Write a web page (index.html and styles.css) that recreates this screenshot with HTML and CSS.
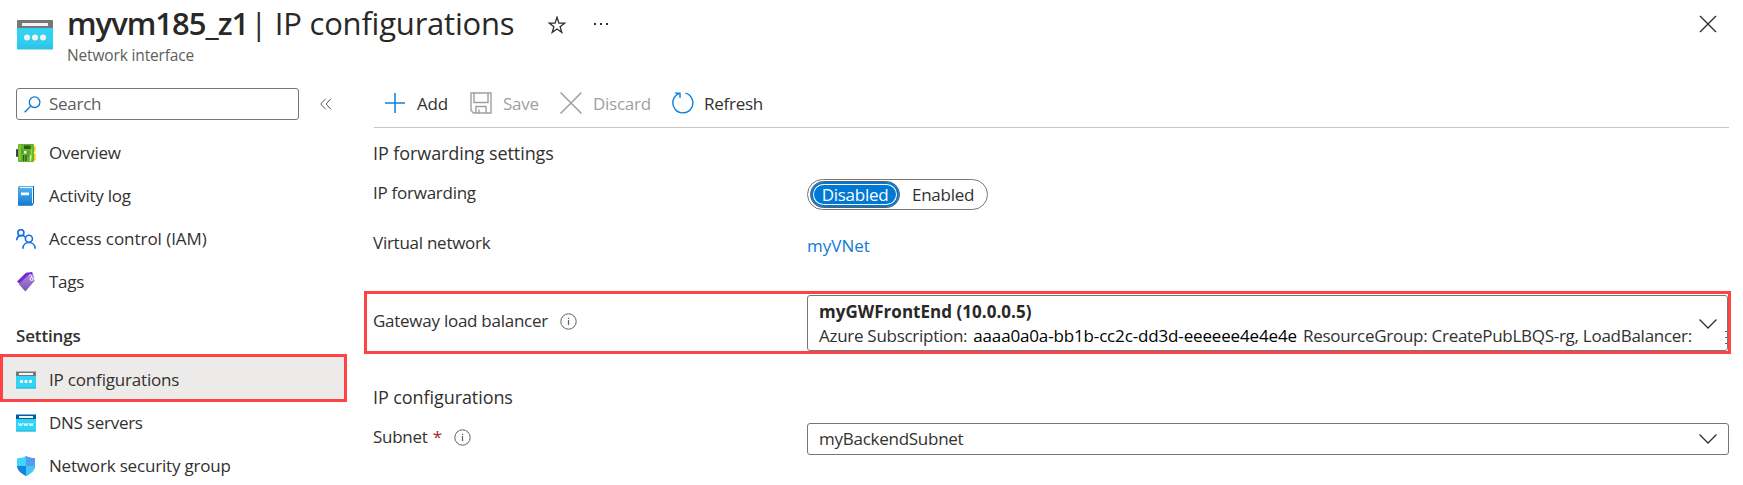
FILE: index.html
```html
<!DOCTYPE html>
<html lang="en">
<head>
<meta charset="utf-8">
<title>myvm185_z1 | IP configurations</title>
<link rel="stylesheet" href="styles.css">
</head>
<body>
<header class="header">
  <svg class="header-icon" width="36" height="30" viewBox="0 0 36 30">
    <defs><linearGradient id="nic" x1="0" y1="0" x2="0" y2="1"><stop offset="0" stop-color="#32d4f5"/><stop offset=".6" stop-color="#32d0f0"/><stop offset="1" stop-color="#2fc0e2"/></linearGradient></defs>
    <path d="M0 7h36v21.500a1 1 0 0 1-1 1H1a1 1 0 0 1-1-1z" fill="url(#nic)"/>
    <path d="M1 0h34a1 1 0 0 1 1 1v7H0V1a1 1 0 0 1 1-1z" fill="#767676"/>
    <rect x="5" y="3" width="26" height="3" fill="#f2f2f2"/>
    <g fill="#f2f2f2"><circle cx="10" cy="17.500" r="3"/><circle cx="18" cy="17.500" r="3"/><circle cx="26" cy="17.500" r="3"/></g>
  </svg>
  <div class="titles">
    <h1 class="title"><span class="title-name">myvm185_z1</span><span class="title-page">| IP configurations</span></h1>
    <div class="subtitle">Network interface</div>
  </div>
  <svg class="star" width="18" height="18" viewBox="0 0 18 18" fill="none" stroke="#323130" stroke-width="1.300"><path d="M9 1.200l1.900 5.900h5.900l-4.700 3.600 1.700 5.700L9 13l-4.800 3.400 1.700-5.700L1.200 7.100h5.900z"/></svg>
  <svg class="more" width="16" height="4" viewBox="0 0 16 4" fill="#323130"><rect x="1" y="1" width="2" height="2"/><rect x="7" y="1" width="2" height="2"/><rect x="13" y="1" width="2" height="2"/></svg>
  <svg class="close" width="18" height="18" viewBox="0 0 18 18" stroke="#323130" stroke-width="1.400"><path d="M1 1l16 16M17 1L1 17"/></svg>
</header>
<div class="body">
  <nav class="sidebar">
    <div class="search-row">
      <div class="search">
        <svg width="17" height="17" viewBox="0 0 17 17" fill="none" stroke="#0f78d4" stroke-width="1.300"><circle cx="10.600" cy="6.200" r="5.300"/><path d="M6.800 10L.6 16.200"/></svg>
        <span class="t-search">Search</span>
      </div>
      <svg class="collapse" width="12" height="12" viewBox="0 0 12 12" fill="none" stroke="#605e5c" stroke-width="1"><path d="M5.700.7L.8 6l4.900 5.300M11 .7L6.100 6l4.900 5.300"/></svg>
    </div>
    <a class="item">
      <svg width="20" height="20" viewBox="0 0 20 20"><rect x="0" y="6" width="2" height="8" rx=".8" fill="#444"/><rect x="17" y="3.500" width="2.600" height="5" fill="#ffca00"/><rect x="17" y="10.500" width="2.600" height="7" fill="#ffca00"/><rect x="2" y="1" width="16" height="18" rx="1" fill="#68b52d"/><path d="M4 2v15M15.500 6v10" stroke="#94d83f" stroke-width="1.200"/><rect x="8" y="2.500" width="6.500" height="3.500" fill="#285b13"/><rect x="8" y="8" width="2.500" height="2.500" fill="#e7f5d9"/><path d="M7.500 12v6M10 12v6" stroke="#315b23" stroke-width="1.400"/><path d="M14.500 12v6" stroke="#d7eac8" stroke-width="1.300"/><path d="M6 6v5M12 8v6" stroke="#48851f"/></svg>
      <span class="t-overview">Overview</span></a>
    <a class="item">
      <svg width="20" height="20" viewBox="0 0 20 20"><defs><linearGradient id="log" x1="0" y1="0" x2="0" y2="1"><stop offset="0" stop-color="#50b0ee"/><stop offset="1" stop-color="#137cd1"/></linearGradient></defs><path d="M3.500 0H18v17l-1.500 2.500H2V1.500z" fill="#14609f"/><path d="M3.500 1H17v16l-1 1V3H3z" fill="#e9f4fc"/><path d="M3.500 0H17v1H4z" fill="#58b2ed"/><rect x="2" y="2" width="14" height="17.500" rx=".8" fill="url(#log)"/><rect x="5" y="6.500" width="8" height="2.700" fill="#fff"/></svg>
      <span class="t-activity">Activity log</span></a>
    <a class="item">
      <svg width="20" height="20" viewBox="0 0 20 20" fill="none" stroke="#126de0" stroke-width="1.600"><circle cx="4.900" cy="3.700" r="3"/><circle cx="12.900" cy="9.700" r="3.500"/><path d="M.8 11.200C.8 5.500 7.600 5.700 9.400 8.300M6.800 19.700c.3-8.200 12.100-8.200 12.400 0"/></svg>
      <span class="t-iam">Access control (IAM)</span></a>
    <a class="item">
      <svg width="20" height="20" viewBox="0 0 20 20"><defs><linearGradient id="tag" x1="0" y1="0" x2="0" y2="1"><stop offset="0" stop-color="#b08be0"/><stop offset="1" stop-color="#7c4eb8"/></linearGradient></defs><path d="M1 9.500L10 .8 16 0l1 2-10 13z" fill="#6d2fd0"/><path d="M3 12L13 2.600l4.500.2L18.500 9 9.300 19.500 3.500 13z" fill="url(#tag)"/><circle cx="15.600" cy="7" r="1.500" fill="#a77be0" stroke="#fff"/><path d="M13.500 4c0-2 2-2 2 0v1" fill="none" stroke="#eee0ff" stroke-width="1"/></svg>
      <span class="t-tags">Tags</span></a>
    <h2 class="group"><span class="t-settings">Settings</span></h2>
    <a class="item selected">
      <svg width="20" height="20" viewBox="0 0 20 20"><rect y="2" width="20" height="16.500" rx=".6" fill="#32d4f5"/><rect y="17" width="20" height="1.500" fill="#2fc0e2"/><rect y="1.500" width="20" height="4.500" fill="#767676"/><rect x="3" y="3" width="14" height="2" fill="#f5f5f5"/><g fill="#fff"><rect x="4" y="10" width="3" height="3" rx=".8"/><rect x="8.500" y="10" width="3" height="3" rx=".8"/><rect x="13" y="10" width="3" height="3" rx=".8"/></g></svg>
      <span class="t-ipc">IP configurations</span></a>
    <a class="item">
      <svg width="20" height="20" viewBox="0 0 20 20"><rect y="2" width="20" height="16.500" rx=".6" fill="#32d4f5"/><rect y="17" width="20" height="1.500" fill="#2fc0e2"/><rect y="1.500" width="20" height="4.500" fill="#005ba1"/><rect x="3" y="3" width="14" height="2" fill="#f5f5f5"/><path d="M2.500 10l1 3 1-2.500 1 2.500 1-3M7.800 10l1 3 1-2.500 1 2.500 1-3M13.100 10l1 3 1-2.500 1 2.500 1-3" stroke="#fff" fill="none" stroke-width=".9"/></svg>
      <span class="t-dns">DNS servers</span></a>
    <a class="item">
      <svg width="20" height="20" viewBox="0 0 20 20"><path d="M10 0C7 2.300 4.500 1.800 1 2.400V9c0 5.500 4.500 8.500 9 11z" fill="#40d4fa"/><path d="M10 0c3 2.300 5.500 1.800 9 2.400V9c0 5.500-4.500 8.500-9 11z" fill="#1177d8"/><path d="M10 0c3 2.300 5.500 1.800 9 2.400V9q0 .5-.1 1H10z" fill="#559cf0"/><path d="M1.100 10H10v10C5.500 17.500 1.500 15 1.100 10z" fill="#1683df"/><path d="M10 10h8.900c-.4 5-4.400 7.500-8.900 10z" fill="#40c9f5"/></svg>
      <span class="t-nsg">Network security group</span></a>
  </nav>
  <main class="main">
    <div class="toolbar">
      <svg class="i-add" width="22" height="22" viewBox="0 0 22 22" stroke="#0f7fd9" stroke-width="1.500"><path d="M11 1v20M1 11h20"/></svg>
      <span class="cmd t-add">Add</span>
      <svg class="i-save" width="22" height="22" viewBox="0 0 22 22" fill="none" stroke="#a19f9d" stroke-width="1.400"><path d="M1 1h20v20H3.500L1 18.500zM4 1v9.500h14V1M6 21v-6.500h10V21M9 21v-3.500"/></svg>
      <span class="cmd off t-save">Save</span>
      <svg class="i-discard" width="22" height="22" viewBox="0 0 22 22" stroke="#a19f9d" stroke-width="1.500"><path d="M.5.5l21 21M21.500.5l-21 21"/></svg>
      <span class="cmd off t-discard">Discard</span>
      <svg class="i-refresh" width="22" height="22" viewBox="0 0 22 22" fill="none" stroke="#0f7fd9" stroke-width="1.400"><path d="M13.500 1.200A10 10 0 1 1 7 1.600M3 1.100h5V6"/></svg>
      <span class="cmd t-refresh">Refresh</span>
    </div>
    <h3 class="section first"><span class="t-fset">IP forwarding settings</span></h3>
    <div class="row forwarding">
      <div class="label"><span class="t-fwd">IP forwarding</span></div>
      <div class="toggle"><span class="on"><span class="t-dis">Disabled</span></span><span class="choice"><span class="t-en">Enabled</span></span></div>
    </div>
    <div class="row network">
      <div class="label"><span class="t-vn">Virtual network</span></div>
      <a class="link"><span class="t-vnet">myVNet</span></a>
    </div>
    <div class="row gateway">
      <div class="label"><span class="t-gw">Gateway load balancer</span>
        <svg class="info" width="17" height="17" viewBox="0 0 17 17" fill="none" stroke="#605e5c"><circle cx="8.500" cy="8.500" r="7.700"/><path d="M8.500 7v5M8.500 4.800v1.200" stroke-width="1.200"/></svg></div>
      <div class="select tall">
        <div class="select-text">
          <div class="strong"><span class="t-front">myGWFrontEnd (10.0.0.5)</span></div>
          <div class="detail"><span class="t-sub">Azure Subscription:</span><span class="guid">aaaa0a0a-bb1b-cc2c-dd3d-eeeeee4e4e4e</span><span class="t-rg">ResourceGroup: CreatePubLBQS-rg, LoadBalancer:</span></div>
        </div>
        <svg class="chev" width="18" height="10" viewBox="0 0 18 10" fill="none" stroke="#323130" stroke-width="1.300"><path d="M.5.500L9 9 17.500.5"/></svg>
        <svg class="cut" width="2" height="13" viewBox="0 0 2 13" fill="#605e5c"><path d="M0 0h2v1H0zM0 6h2v1H0zM0 12h2v1H0z"/></svg>
      </div>
    </div>
    <h3 class="section second"><span class="t-ipsec">IP configurations</span></h3>
    <div class="row">
      <div class="label"><span class="t-subnet">Subnet</span><span class="req">*</span>
        <svg class="info" width="17" height="17" viewBox="0 0 17 17" fill="none" stroke="#605e5c"><circle cx="8.500" cy="8.500" r="7.700"/><path d="M8.500 7v5M8.500 4.800v1.200" stroke-width="1.200"/></svg></div>
      <div class="select">
        <div class="select-text"><span class="t-back">myBackendSubnet</span></div>
        <svg class="chev" width="18" height="10" viewBox="0 0 18 10" fill="none" stroke="#323130" stroke-width="1.300"><path d="M.5.500L9 9 17.500.5"/></svg>
      </div>
    </div>
  </main>
</div>
</body>
</html>
```
FILE: styles.css
```css
* { box-sizing: border-box; }
body { margin: 0; height: 485px; overflow: hidden; background: #fff; color: #323130; font: 17px/24px "Open Sans", "Noto Sans", sans-serif; letter-spacing: -0.26px; white-space: nowrap; }
h1, h2, h3 { margin: 0; font: inherit; }
svg { flex: none; display: block; }

.header { display: flex; align-items: flex-start; height: 88px; padding: 0 26px 0 17px; }
.header-icon { margin-top: 20px; }
.titles { width: 495px; padding-left: 14px; }
.title { height: 44px; padding-top: 1px; font-size: 31px; line-height: 44px; letter-spacing: -0.22px; color: #292827; }
.title-name { font-weight: 600; letter-spacing: -1px; }
.title-page { margin-left: 2px; }
.subtitle { font-size: 15.500px; line-height: 22px; letter-spacing: -0.15px; color: #605e5c; }
.star { margin-top: 16px; }
.more { margin: 22px 0 0 27px; }
.close { margin: 15px 0 0 auto; }

.body { display: flex; }
.sidebar { width: 347px; flex: none; }
.search-row { display: flex; align-items: center; height: 32px; margin: 0 0 11px 16px; }
.search { display: flex; align-items: center; gap: 8px; width: 283px; height: 32px; padding-left: 7px; border: 1px solid #797775; border-radius: 3px; color: #605e5c; }
.collapse { margin-left: 21px; }
.item { display: flex; align-items: center; gap: 13px; height: 43px; padding-left: 16px; }
.t-iam { letter-spacing: -0.05px; }
.t-nsg, .t-ipc { letter-spacing: -0.18px; }
.group { height: 55px; padding-top: 21px; padding-left: 16px; font-weight: 600; letter-spacing: -0.15px; }
.selected { height: 48px; margin: -4px 0 -1px; padding: 3px 0 0 13px; border: 3px solid #fd4444; background: #edebe9; }

.main { flex: 1; min-width: 0; margin: 0 14px 0 27px; }
.toolbar { display: flex; align-items: center; height: 40px; padding: 0 0 9px 10px; border-bottom: 1px solid #c8c6c4; }
.cmd { margin-left: 11px; padding-top: 1px; }
.off { color: #a19f9d; }
.t-add { width: 32px; }
.i-save { margin-left: 21px; }
.t-save { width: 36px; }
.i-discard { margin-left: 21px; }
.t-discard { width: 57px; }
.i-refresh { margin-left: 22px; }
.t-refresh { margin-left: 10px; }
.section { margin-left: -1px; font-size: 18px; letter-spacing: -0.08px; }
.first { height: 51px; padding-top: 13px; }
.second { height: 69px; padding-top: 31px; }
.row { display: flex; align-items: flex-start; }
.label { display: flex; align-items: center; width: 434px; margin-left: -1px; flex: none; padding-top: 2px; }
.info { margin-left: 12px; }
.forwarding { height: 50px; }
.network { height: 62px; }
.toggle { display: flex; align-items: center; width: 181px; height: 31px; padding-left: 2px; border: 1px solid #797775; border-radius: 16px; }
.on { display: flex; align-items: center; justify-content: center; width: 90px; height: 27px; border: 1px solid #605e5c; border-radius: 14px; background: #0078d4; box-shadow: inset 0 0 0 2px #0078d4, inset 0 0 0 3px #fff; color: #fff; }
.choice { margin-left: 12px; }
.link { padding-top: 5px; color: #0f7bd5; letter-spacing: 0; }
.gateway { height: 63px; margin: 0 -2px 0 -10px; padding: 1px 0 0 7px; border: 3px solid #fd4444; }
.gateway .label { padding-top: 14px; }
.select { display: flex; align-items: center; flex: 1; min-width: 0; height: 32px; padding: 0 11px; border: 1px solid #797775; border-radius: 3px; }
.tall { position: relative; height: 56px; }
.tall .select-text { padding-top: 1px; }
.tall .chev { margin: 2px -1px 0 0; }
.select-text { flex: 1; min-width: 0; }
.strong { font-weight: 700; letter-spacing: 0.03px; color: #292827; }
.detail { display: flex; }
.t-sub { letter-spacing: -0.28px; }
.guid { margin-left: 6px; letter-spacing: -0.15px; color: #000; }
.t-rg { margin-left: 6px; letter-spacing: -0.27px; }
.cut { position: absolute; right: 0; top: 35px; }
.req { margin-left: 5px; color: #a4262c; }
```
